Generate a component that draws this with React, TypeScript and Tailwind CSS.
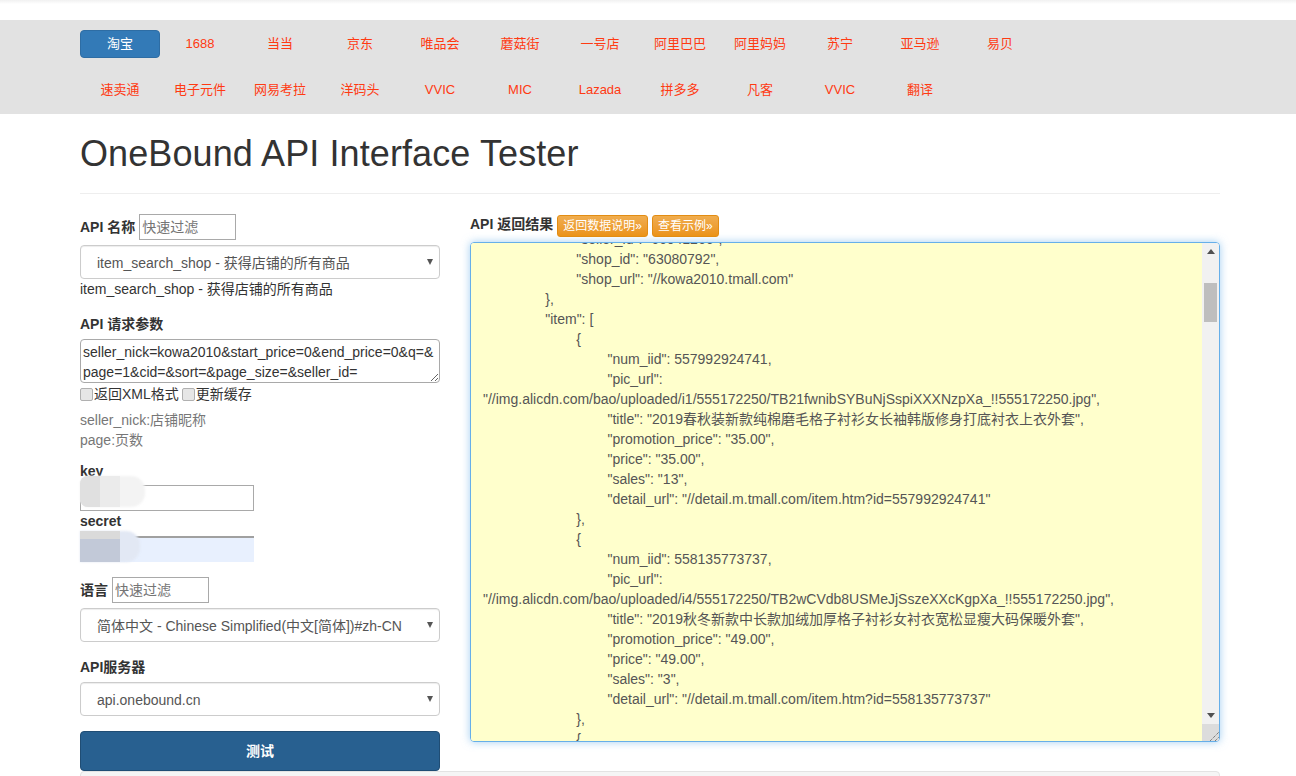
import React from "react";

const row1 = ["淘宝", "1688", "当当", "京东", "唯品会", "蘑菇街", "一号店", "阿里巴巴", "阿里妈妈", "苏宁", "亚马逊", "易贝"];
const row2 = ["速卖通", "电子元件", "网易考拉", "洋码头", "VVIC", "MIC", "Lazada", "拼多多", "凡客", "VVIC", "翻译"];

const json = `\t\t\t"seller_id": "66041266",
\t\t\t"shop_id": "63080792",
\t\t\t"shop_url": "//kowa2010.tmall.com"
\t\t},
\t\t"item": [
\t\t\t{
\t\t\t\t"num_iid": 557992924741,
\t\t\t\t"pic_url": "//img.alicdn.com/bao/uploaded/i1/555172250/TB21fwnibSYBuNjSspiXXXNzpXa_!!555172250.jpg",
\t\t\t\t"title": "2019春秋装新款纯棉磨毛格子衬衫女长袖韩版修身打底衬衣上衣外套",
\t\t\t\t"promotion_price": "35.00",
\t\t\t\t"price": "35.00",
\t\t\t\t"sales": "13",
\t\t\t\t"detail_url": "//detail.m.tmall.com/item.htm?id=557992924741"
\t\t\t},
\t\t\t{
\t\t\t\t"num_iid": 558135773737,
\t\t\t\t"pic_url": "//img.alicdn.com/bao/uploaded/i4/555172250/TB2wCVdb8USMeJjSszeXXcKgpXa_!!555172250.jpg",
\t\t\t\t"title": "2019秋冬新款中长款加绒加厚格子衬衫女衬衣宽松显瘦大码保暖外套",
\t\t\t\t"promotion_price": "49.00",
\t\t\t\t"price": "49.00",
\t\t\t\t"sales": "3",
\t\t\t\t"detail_url": "//detail.m.tmall.com/item.htm?id=558135773737"
\t\t\t},
\t\t\t{`;

function Caret() {
  return (
    <svg className="absolute right-[7px] top-1/2 -mt-[3px] pointer-events-none" width="6" height="6" viewBox="0 0 6 6">
      <path d="M0 0h6L3 6z" fill="#555" />
    </svg>
  );
}

function Sel({ value }: { value: string }) {
  return (
    <div className="relative w-[360px] h-[34px]">
      <select
        defaultValue={value}
        className="appearance-none w-full h-full pl-[16px] pr-6 pt-[1px] bg-white border border-[#ccc] rounded-[4px] text-[14px] text-[#555] shadow-[inset_0_1px_1px_rgba(0,0,0,0.075)] outline-none"
      >
        <option>{value}</option>
      </select>
      <Caret />
    </div>
  );
}

function Filter() {
  return (
    <input
      placeholder="快速过滤"
      className="w-[97px] h-[26px] border border-[#a9a9a9] px-[2px] text-[14px] outline-none placeholder:text-[#757575]"
    />
  );
}

function Check({ label }: { label: string }) {
  return (
    <label className="inline-flex items-center">
      <input
        type="checkbox"
        className="appearance-none w-[13px] h-[13px] mr-[1px] bg-[#e6e6e6] border border-[#b0b0b0] rounded-[2px]"
      />
      <span>{label}</span>
    </label>
  );
}

function OrangeBtn({ label }: { label: string }) {
  return (
    <button className="h-[22px] px-[5px] text-[12px] leading-[20px] text-white rounded-[3px] border border-[#e38d13] bg-gradient-to-b from-[#f0ad4e] to-[#eb9316]">
      {label}
    </button>
  );
}

export default function App() {
  return (
    <div
      className="h-[776px] overflow-hidden bg-white text-[14px] leading-[20px] text-[#333]"
      style={{ fontFamily: '"Liberation Sans", "Noto Sans CJK SC", sans-serif' }}
    >
      <div className="h-[20px] bg-gradient-to-b from-[#f1f1f1] via-white via-[20%] to-white" />

      <nav className="h-[94px] bg-[#e2e2e2] pt-[10px]">
        <div className="w-[1140px] ml-[80px] flex flex-col gap-[18px]">
          <div className="flex">
            {row1.map((t, i) => (
              <a
                key={i}
                className={
                  i === 0
                    ? "w-[80px] h-[28px] flex items-center justify-center rounded-[4px] bg-[#337ab7] border border-[#2e6da4] text-[13px] text-white"
                    : "w-[80px] h-[28px] flex items-center justify-center text-[13px] text-[#ff3a12]"
                }
              >
                {t}
              </a>
            ))}
          </div>
          <div className="flex">
            {row2.map((t, i) => (
              <a key={i} className="w-[80px] h-[28px] flex items-center justify-center text-[13px] text-[#ff3a12]">
                {t}
              </a>
            ))}
          </div>
        </div>
      </nav>

      <main className="w-[1140px] ml-[80px]">
        <h1 className="text-[36px] leading-[40px] font-normal tracking-[0.1px] mt-[20px] pb-[19px] border-b border-[#eee]">
          OneBound API Interface Tester
        </h1>

        <div className="flex gap-[30px] mt-[20px]">
          <section className="w-[360px] shrink-0">
            <div className="flex items-center gap-[4px] h-[26px]">
              <b>API 名称</b>
              <Filter />
            </div>
            <div className="mt-[5px]">
              <Sel value="item_search_shop - 获得店铺的所有商品" />
            </div>
            <div>item_search_shop - 获得店铺的所有商品</div>

            <div className="mt-[15px] font-bold">API 请求参数</div>
            <textarea
              readOnly
              value={"seller_nick=kowa2010&start_price=0&end_price=0&q=&page=1&cid=&sort=&page_size=&seller_id="}
              className="block mt-[5px] w-[360px] h-[44px] border border-[#a9a9a9] rounded-[4px] px-[2px] py-[2px] text-[14px] leading-[20px] text-[#333] outline-none"
            />
            <div className="flex items-center gap-[3px] mt-[1px]">
              <Check label="返回XML格式" />
              <Check label="更新缓存" />
            </div>
            <div className="mt-[6px] text-[#777]">
              <div>seller_nick:店铺昵称</div>
              <div>page:页数</div>
            </div>

            <div className="mt-[12px] font-bold leading-[18px]">key</div>
            <div className="relative mt-[5px] w-[174px] h-[26px]">
              <input className="w-full h-full border border-[#a9a9a9] outline-none" />
              <div className="absolute left-0 top-[-9px] w-[65px] h-[31px] rounded-r-[14px] rounded-l-[8px] bg-[#f3f3f3] blur-[1px]" />
              <div className="absolute left-0 top-[-9px] w-[40px] h-[31px] rounded-l-[8px] bg-[#ebebeb]" />
              <div className="absolute left-0 top-[-9px] w-[20px] h-[31px] rounded-l-[8px] bg-[#e0e0e0]" />
            </div>
            <div className="font-bold">secret</div>
            <div className="relative mt-[5px] w-[174px] h-[26px]">
              <input className="w-full h-full bg-[#e8f0fe] border-t-2 border-[#a0a0a0] outline-none" />
              <div className="absolute left-0 top-[-5px] w-[60px] h-[31px] rounded-r-[14px] bg-[#e2e8f4] blur-[1px]" />
              <div className="absolute left-0 top-[-5px] w-[40px] h-[31px] bg-[#c2c9d8]" />
              <div className="absolute left-0 top-[-5px] w-[40px] h-[8px] bg-[#dadada]" />
            </div>

            <div className="flex items-center gap-[4px] h-[26px] mt-[15px]">
              <b className="font-bold">语言</b>
              <Filter />
            </div>
            <div className="mt-[5px]">
              <Sel value="简体中文 - Chinese Simplified(中文[简体])#zh-CN" />
            </div>
            <div className="mt-[15px] font-bold">API服务器</div>
            <div className="mt-[5px]">
              <Sel value="api.onebound.cn" />
            </div>
            <button className="block mt-[15px] w-[360px] h-[40px] rounded-[4px] bg-[#286090] border border-[#204d74] font-bold text-white">
              测试
            </button>
          </section>

          <section className="w-[750px]">
            <div className="flex items-start gap-[4px] h-[22px] mt-[1px]">
              <b className="leading-[18px]">API 返回结果</b>
              <OrangeBtn label="返回数据说明»" />
              <OrangeBtn label="查看示例»" />
            </div>
            <div className="flex mt-[5px] h-[500px] rounded-[4px] border border-[#66afe9] shadow-[0_0_8px_rgba(102,175,233,0.6)] overflow-hidden">
              <div className="flex-1 min-w-0 bg-[#ffffcc] overflow-hidden pl-[12px] pr-[12px] text-[#555]">
                <div className="-mt-[14px] whitespace-pre-wrap [tab-size:8] [overflow-wrap:anywhere]">{json}</div>
              </div>
              <div className="w-[17px] shrink-0 bg-[#f1f1f1] flex flex-col items-center">
                <svg className="mt-[6px]" width="8" height="5" viewBox="0 0 8 5">
                  <path d="M4 0l4 5H0z" fill="#505050" />
                </svg>
                <div className="w-[13px] h-[39px] mt-[29px] bg-[#bebebe]" />
                <div className="flex-1" />
                <svg className="mb-[6px]" width="8" height="5" viewBox="0 0 8 5">
                  <path d="M0 0h8L4 5z" fill="#505050" />
                </svg>
                <div className="relative w-[17px] h-[17px] bg-[#dcdcdc]">
                  <svg className="absolute right-0 bottom-0" width="10" height="10" viewBox="0 0 10 10">
                    <path d="M1 10L10 1M6 10l4-4" stroke="#555" strokeWidth="1" strokeDasharray="1 1" />
                  </svg>
                </div>
              </div>
            </div>
          </section>
        </div>

        <div className="h-[20px] bg-[#f5f5f5] border border-[#e3e3e3] rounded-[4px]" />
      </main>
    </div>
  );
}
